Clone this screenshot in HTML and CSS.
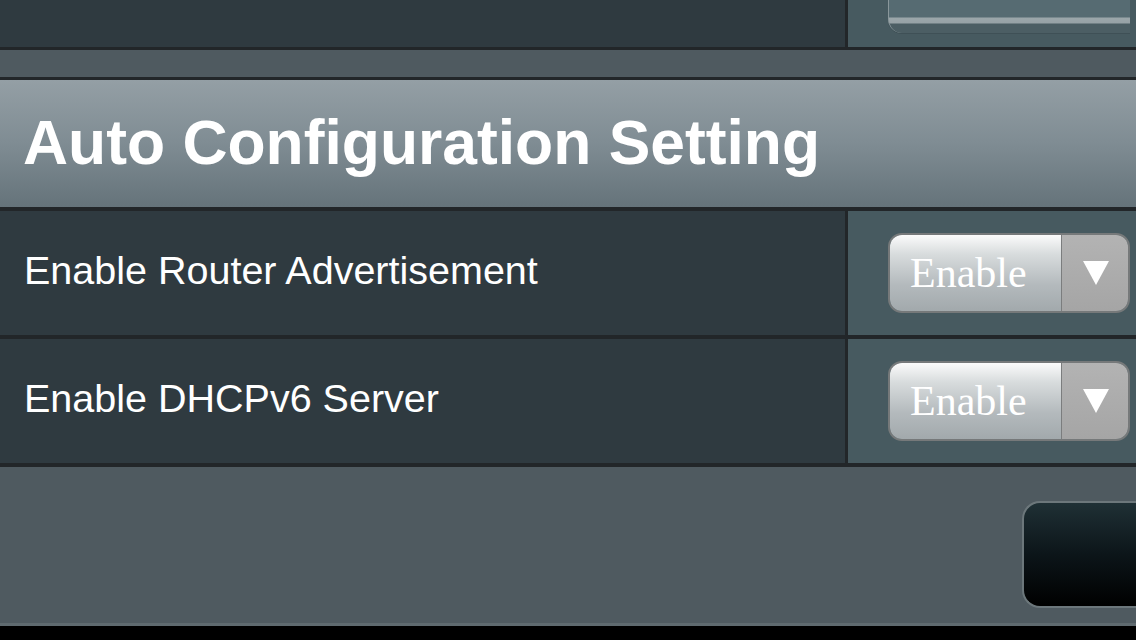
FILE: index.html
```html
<!DOCTYPE html>
<html>
<head>
<meta charset="utf-8">
<link rel="stylesheet" href="styles.css">
</head>
<body>
<div class="page">
  <div class="row row-top">
    <div class="cell-label"></div>
    <div class="cell-value"><div class="top-widget"></div></div>
  </div>
  <div class="gap"></div>
  <div class="header"><h1 class="title">Auto Configuration Setting</h1></div>
  <div class="row row-setting">
    <div class="cell-label"><span class="label">Enable Router Advertisement</span></div>
    <div class="cell-value">
      <div class="select"><span class="select-text">Enable</span><span class="select-arrow"><svg width="28" height="26" viewBox="0 0 28 26"><polygon points="1,1 27,1 14,25" fill="#fff"/></svg></span></div>
    </div>
  </div>
  <div class="row row-setting">
    <div class="cell-label"><span class="label">Enable DHCPv6 Server</span></div>
    <div class="cell-value">
      <div class="select"><span class="select-text">Enable</span><span class="select-arrow"><svg width="28" height="26" viewBox="0 0 28 26"><polygon points="1,1 27,1 14,25" fill="#fff"/></svg></span></div>
    </div>
  </div>
  <div class="footer">
    <div class="apply-btn"></div>
  </div>
</div>
</body>
</html>
```

FILE: styles.css
```css
html, body {
  margin: 0;
  padding: 0;
  background: #000;
  width: 1136px;
  height: 640px;
  overflow: hidden;
  font-family: "Liberation Sans", Arial, sans-serif;
}
.page {
  display: flex;
  flex-direction: column;
  width: 1136px;
}
.row {
  display: flex;
  border-bottom: 3px solid #222629;
}
.row-top {
  height: 47px;
}
.row-setting {
  height: 124px;
  border-bottom-width: 4px;
}
.row-setting:last-of-type {
  border-bottom-width: 3px;
}
.cell-label {
  width: 848px;
  flex-shrink: 0;
  border-right: 3px solid #222629;
  background: #2f3a40;
  display: flex;
  align-items: center;
  padding-left: 24px;
  padding-bottom: 5px;
  box-sizing: border-box;
}
.row-top .cell-label {
  padding: 0;
}
.cell-value {
  flex: 1;
  background: #475a60;
  display: flex;
  align-items: center;
  padding-left: 40px;
  padding-right: 6px;
}
.row-top .cell-value {
  align-items: flex-start;
}
.top-widget {
  flex: 1;
  height: 33px;
  border-bottom-left-radius: 14px;
  border-left: 1px solid #8a979b;
  background: linear-gradient(to bottom, #566b72 0, #566b72 17px, #9ba6aa 18px, #97a2a6 23px, #4c5e64 24px, #4c5e64 100%);
  box-shadow: 0 1px 0 #3f5056;
}
.gap {
  height: 27px;
  background: #4f5a60;
  border-bottom: 3px solid #222629;
}
.header {
  height: 127px;
  background: linear-gradient(to bottom, #949fa5 0%, #7f8c93 50%, #65737a 100%);
  border-bottom: 4px solid #222629;
  display: flex;
  align-items: center;
  padding-left: 23px;
}
.title {
  margin: 0;
  font-size: 62.4px;
  font-weight: bold;
  color: #fff;
  line-height: 1;
}
.label {
  font-size: 39.5px;
  color: #fff;
}
.select {
  display: flex;
  width: 238px;
  height: 76px;
  border: 2px solid #76797a;
  border-radius: 14px;
  overflow: hidden;
  box-sizing: content-box;
}
.select-text {
  width: 172px;
  background: linear-gradient(to bottom, #fbfbfb 0%, #d8dcdd 25%, #b4babd 65%, #a2a9ac 100%);
  border-right: 1px solid #7b7d7e;
  font-family: "Liberation Serif", "Times New Roman", serif;
  font-size: 42px;
  color: #fff;
  display: flex;
  align-items: center;
  padding-left: 20px;
  box-sizing: border-box;
}
.select-arrow {
  flex: 1;
  background: linear-gradient(to bottom, #b3b3b3 0%, #a5a5a5 100%);
  display: flex;
  align-items: center;
  justify-content: center;
  padding-left: 2px;
}
.footer {
  height: 159px;
  background: #4f5a60;
  border-bottom: 3px solid #5f6a6f;
  display: flex;
  justify-content: flex-end;
  align-items: flex-start;
  box-sizing: border-box;
}
.apply-btn {
  width: 118px;
  height: 103px;
  margin-top: 34px;
  margin-right: -6px;
  border: 2px solid #6c777b;
  border-right: none;
  border-radius: 18px 0 0 18px;
  background: linear-gradient(to bottom, #1f3035 0%, #0c1519 50%, #000 100%);
}
```
